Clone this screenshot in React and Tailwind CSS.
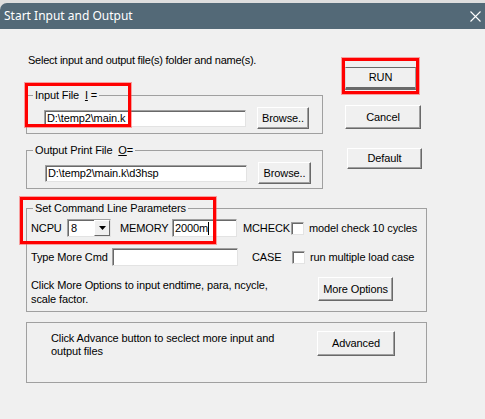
import React from 'react';

// classic raised push button
const Btn = ({ className = '', children }) => (
  <div
    className={`flex items-center justify-center bg-[#f0f0f0] border border-t-white border-l-white border-r-[#696969] border-b-[#696969] shadow-[inset_-1px_-1px_0_#a0a0a0] ${className}`}
  >
    {children}
  </div>
);

// sunken edit field
const Field = ({ className = '', children }) => (
  <div
    className={`flex items-center bg-white pl-[2px] border border-t-[#a0a0a0] border-l-[#a0a0a0] border-r-[#e3e3e3] border-b-[#e3e3e3] shadow-[inset_1px_1px_0_#696969] ${className}`}
  >
    {children}
  </div>
);

const Check = () => (
  <div className="w-[13px] h-[13px] bg-white border border-t-[#a0a0a0] border-l-[#a0a0a0] border-r-[#e3e3e3] border-b-[#e3e3e3] shadow-[inset_1px_1px_0_#696969]" />
);

const Group = ({ legend, className = '', children }) => (
  <div className={`relative border border-[#a0a0a0] ${className}`}>
    {legend && (
      <span className="absolute -top-[7px] left-[6px] bg-[#f0f0f0] px-[2px] leading-[13px] whitespace-nowrap">
        {legend}
      </span>
    )}
    {children}
  </div>
);

const Mark = ({ className }) => (
  <div className={`absolute border-[3px] border-[#ff0000] shadow-[0_0_0_1px_rgba(255,60,60,0.45)] pointer-events-none ${className}`} />
);

export default function App() {
  return (
    <div className="relative w-[485px] h-[419px] overflow-hidden bg-[#f0f0f0] text-black text-[11px] tracking-[-0.12px] font-['Liberation_Sans',Arial,sans-serif]">
      <div className="bg-[#dedede] pt-[3px]">
        <div className="h-[26px] bg-[#536977] rounded-tl-[7px] flex items-center justify-between pl-[4px] pr-[4px]">
          <span className="text-white text-[12px] tracking-normal font-['Noto_Sans','Open_Sans',sans-serif]">
            Start Input and Output
          </span>
          <svg width="11" height="11" viewBox="0 0 11 11">
            <path d="M0.5 0.5 L10.5 10.5 M10.5 0.5 L0.5 10.5" stroke="#ffffff" strokeWidth="1.1" fill="none" />
          </svg>
        </div>
      </div>

      <div className="flex pt-[25px]">
        <div className="ml-[26px] w-[297px] flex flex-col">
          <p className="ml-[2px] h-[13px] leading-[13px] whitespace-nowrap tracking-[-0.25px]">
            Select input and output file(s) folder and name(s).
          </p>
          <Group
            className="mt-[28px] h-[39px]"
            legend={<>Input File&nbsp;&nbsp;<u>I</u> =</>}
          >
            <div className="mt-[11px] flex items-center">
              <Field className="ml-[17px] w-[202px] h-[17px]">D:\temp2\main.k</Field>
              <Btn className="ml-[11px] w-[52px] h-[22px]">Browse..</Btn>
            </div>
          </Group>
          <Group
            className="mt-[16px] h-[39px]"
            legend={<>Output Print File&nbsp;&nbsp;<u>O</u>=</>}
          >
            <div className="mt-[11px] flex items-center">
              <Field className="ml-[18px] w-[202px] h-[17px]">D:\temp2\main.k\d3hsp</Field>
              <Btn className="ml-[11px] w-[53px] h-[22px]">Browse..</Btn>
            </div>
          </Group>
        </div>

        <div className="ml-[22px] flex flex-col items-start">
          <div className="mt-[13px] w-[71px] h-[23px] flex items-center justify-center bg-[#f0f0f0] border-t border-t-[#696969] border-l border-l-[#dcdcdc] border-r border-r-[#a0a0a0] border-b-[3px] border-b-[#696969]">
            RUN
          </div>
          <Btn className="mt-[15px] w-[76px] h-[24px]">Cancel</Btn>
          <Btn className="mt-[19px] ml-[2px] w-[75px] h-[21px]">Default</Btn>
        </div>
      </div>

      <div className="ml-[26px] w-[401px] flex flex-col">
        <Group className="mt-[19px] h-[104px]" legend="Set Command Line Parameters">
          <div className="mt-[10px] h-[18px] flex items-center">
            <span className="ml-[4px] w-[36px]">NCPU</span>
            <Field className="w-[44px] h-[18px] !pl-[3px] justify-between">
              <span>8</span>
              <div className="w-[16px] h-[16px] flex items-center justify-center bg-[#f0f0f0] border border-t-white border-l-white border-r-[#696969] border-b-[#696969]">
                <svg width="7" height="4" viewBox="0 0 7 4">
                  <path d="M0 0 H7 L3.5 4 Z" fill="#000" />
                </svg>
              </div>
            </Field>
            <span className="ml-[9px] w-[52px]">MEMORY</span>
            <Field className="w-[65px] h-[18px]">
              <span>2000m</span>
              <span className="w-[1px] h-[13px] bg-black" />
            </Field>
            <span className="ml-[6px] w-[48px]">MCHECK</span>
            <Check />
            <span className="ml-[5px] whitespace-nowrap">model check 10 cycles</span>
          </div>

          <div className="mt-[11px] h-[18px] flex items-center">
            <span className="ml-[4px] w-[81px] whitespace-nowrap">Type More Cmd</span>
            <Field className="w-[126px] h-[18px]" />
            <span className="ml-[14px] w-[40px]">CASE</span>
            <Check />
            <span className="ml-[5px] whitespace-nowrap">run multiple load case</span>
          </div>

          <div className="mt-[11px] flex items-start">
            <p className="ml-[4px] mt-[1px] w-[287px] leading-[14px]">
              Click More Options to input endtime, para, ncycle,
              <br />
              scale factor.
            </p>
            <Btn className="w-[75px] h-[24px]">More Options</Btn>
          </div>
        </Group>

        <Group className="mt-[10px] h-[61px]">
          <div className="flex items-start">
            <p className="ml-[24px] mt-[9px] w-[266px] leading-[13px]">
              Click Advance button to seclect more input and
              <br />
              output files
            </p>
            <Btn className="mt-[8px] w-[78px] h-[25px]">Advanced</Btn>
          </div>
        </Group>
      </div>

      <Mark className="left-[25px] top-[83px] w-[106px] h-[44px]" />
      <Mark className="left-[342px] top-[58px] w-[77px] h-[36px]" />
      <Mark className="left-[20px] top-[197px] w-[196px] h-[47px]" />
    </div>
  );
}
